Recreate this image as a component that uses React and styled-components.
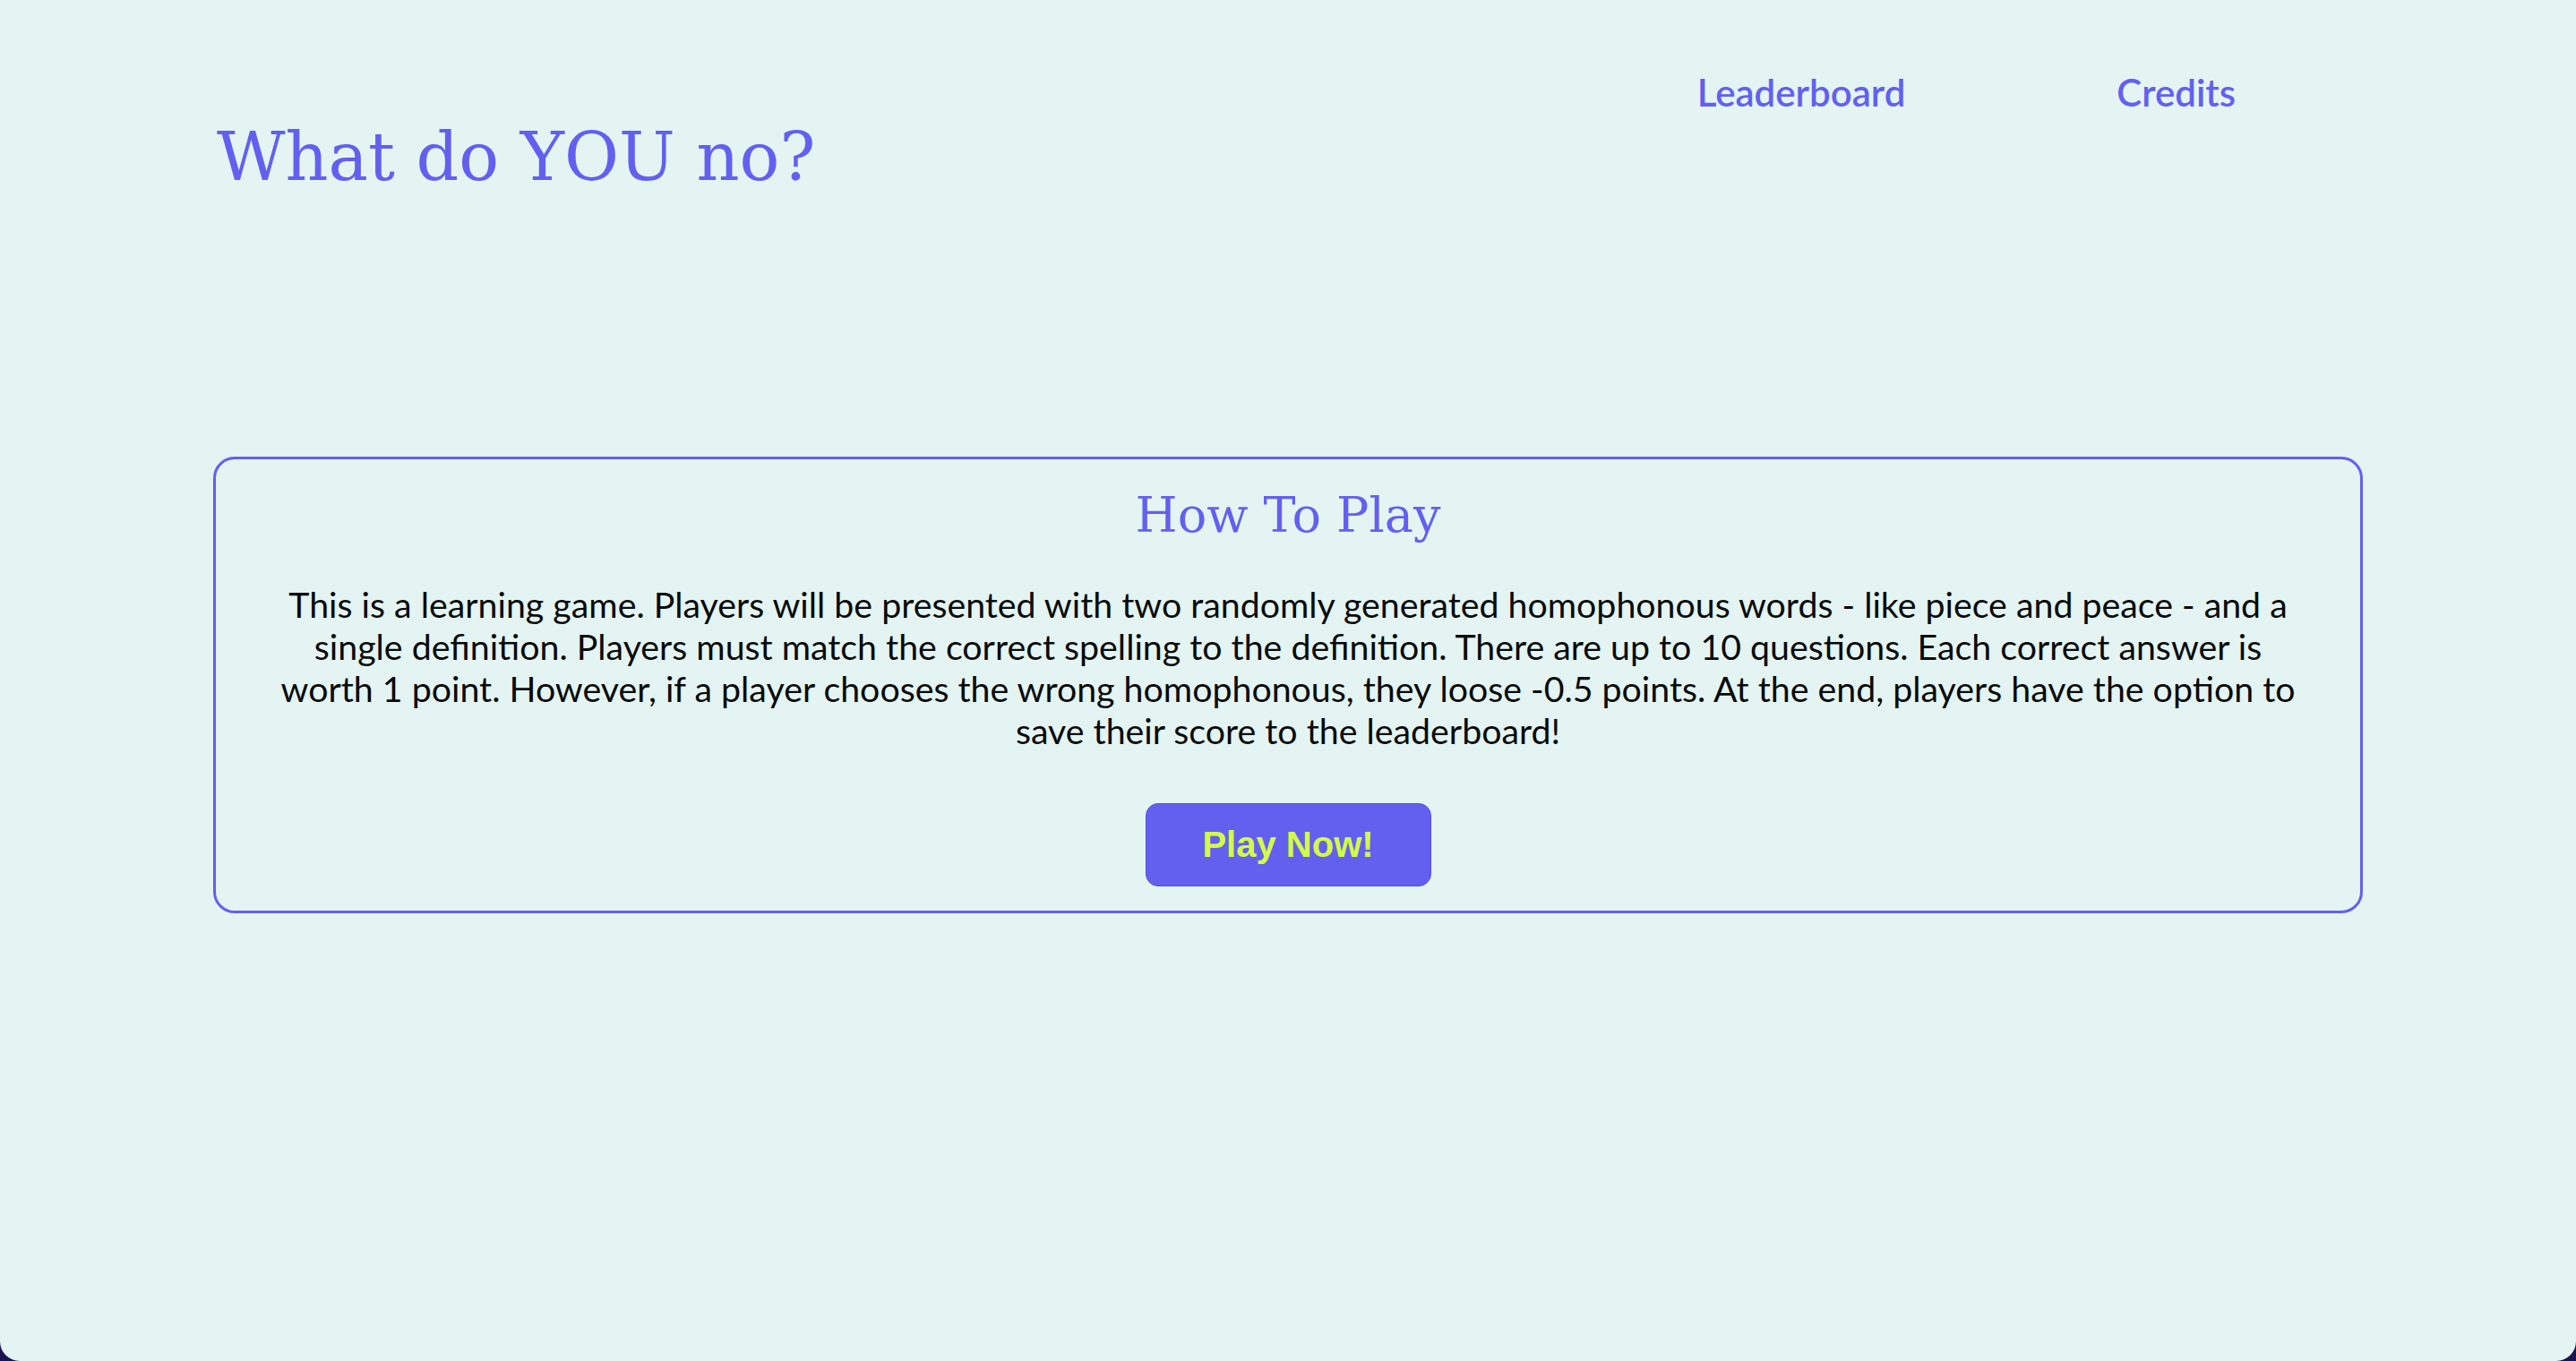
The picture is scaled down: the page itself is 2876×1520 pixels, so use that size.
import React from 'react'
import styled, { createGlobalStyle } from 'styled-components'

const Global = createGlobalStyle`
  html, body {
    margin: 0;
    padding: 0;
    background: #1c1450;
  }
  * { box-sizing: border-box; }
`

const Page = styled.div`
  min-height: 100vh;
  background: #e3f4f2;
  border-radius: 0 0 22px 22px;
  display: flex;
  flex-direction: column;
  align-items: center;
`

const Header = styled.header`
  width: 2400px;
  display: flex;
  justify-content: space-between;
  align-items: flex-start;
`

const Title = styled.h1`
  margin: 126px 0 0 4px;
  font-family: "DejaVu Serif", "Liberation Serif", serif;
  font-weight: normal;
  font-size: 74.5px;
  line-height: 100px;
  color: #6360f0;
`

const Nav = styled.nav`
  display: flex;
  gap: 236px;
  margin: 79px 142px 0 0;
`

const NavLink = styled.a`
  font-family: Lato, "Open Sans", sans-serif;
  font-weight: 600;
  font-size: 42px;
  line-height: 48px;
  color: #6360f0;
  text-decoration: none;
  cursor: pointer;
`

const Card = styled.section`
  margin-top: 284px;
  width: 2400px;
  border: 3px solid #6360f0;
  border-radius: 24px;
  padding: 26px 58px 27px;
  display: flex;
  flex-direction: column;
  align-items: center;
`

const CardTitle = styled.h2`
  margin: 0;
  font-family: "DejaVu Serif", "Liberation Serif", serif;
  font-weight: normal;
  font-size: 54px;
  line-height: 74px;
  color: #6360f0;
`

const Text = styled.p`
  margin: 38px 0 0;
  font-family: Lato, "Open Sans", sans-serif;
  font-size: 39.3px;
  line-height: 47px;
  color: #0a0a0a;
  text-align: center;
`

const PlayButton = styled.button`
  margin-top: 58px;
  width: 319px;
  height: 93px;
  border: 1px solid #5451dd;
  border-radius: 14px;
  background: #6360f0;
  color: #d4fb46;
  font-family: "Liberation Sans", Arial, sans-serif;
  font-weight: bold;
  font-size: 40px;
  cursor: pointer;
`

export default function App() {
  return (
    <>
      <Global />
      <Page>
        <Header>
          <Title>What do YOU no?</Title>
          <Nav>
            <NavLink>Leaderboard</NavLink>
            <NavLink>Credits</NavLink>
          </Nav>
        </Header>
        <Card>
          <CardTitle>How To Play</CardTitle>
          <Text>
            This is a learning game. Players will be presented with two randomly generated homophonous words - like piece and peace - and a single definition. Players must match the correct spelling to the definition. There are up to 10 questions. Each correct answer is worth 1 point. However, if a player chooses the wrong homophonous, they loose -0.5 points. At the end, players have the option to save their score to the leaderboard!
          </Text>
          <PlayButton>Play Now!</PlayButton>
        </Card>
      </Page>
    </>
  )
}
